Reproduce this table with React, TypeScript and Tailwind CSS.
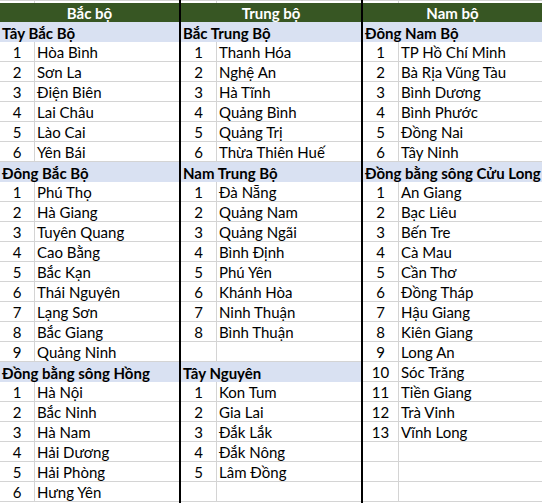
import React from "react";

type Row =
  | { t: "s"; text: string }
  | { t: "i"; n: number; name: string }
  | { t: "e" };

const sec = (text: string): Row => ({ t: "s", text });
const items = (names: string[]): Row[] => names.map((name, i) => ({ t: "i", n: i + 1, name }));
const empty = (): Row => ({ t: "e" });

const groups: { title: string; width: string; numW: string; rows: Row[] }[] = [
  {
    title: "Bắc bộ",
    width: "w-[181px] border-r-2",
    numW: "w-[35px]",
    rows: [
      sec("Tây Bắc Bộ"),
      ...items(["Hòa Bình", "Sơn La", "Điện Biên", "Lai Châu", "Lào Cai", "Yên Bái"]),
      sec("Đông Bắc Bộ"),
      ...items([
        "Phú Thọ",
        "Hà Giang",
        "Tuyên Quang",
        "Cao Bằng",
        "Bắc Kạn",
        "Thái Nguyên",
        "Lạng Sơn",
        "Bắc Giang",
        "Quảng Ninh",
      ]),
      sec("Đồng bằng sông Hồng"),
      ...items(["Hà Nội", "Bắc Ninh", "Hà Nam", "Hải Dương", "Hải Phòng", "Hưng Yên"]),
    ],
  },
  {
    title: "Trung bộ",
    width: "w-[182px] border-r-2",
    numW: "w-[36px]",
    rows: [
      sec("Bắc Trung Bộ"),
      ...items(["Thanh Hóa", "Nghệ An", "Hà Tĩnh", "Quảng Bình", "Quảng Trị", "Thừa Thiên Huế"]),
      sec("Nam Trung Bộ"),
      ...items([
        "Đà Nẵng",
        "Quảng Nam",
        "Quảng Ngãi",
        "Bình Định",
        "Phú Yên",
        "Khánh Hòa",
        "Ninh Thuận",
        "Bình Thuận",
      ]),
      empty(),
      sec("Tây Nguyên"),
      ...items(["Kon Tum", "Gia Lai", "Đắk Lắk", "Đắk Nông", "Lâm Đồng"]),
      empty(),
    ],
  },
  {
    title: "Nam bộ",
    width: "flex-1",
    numW: "w-[36px]",
    rows: [
      sec("Đông Nam Bộ"),
      ...items(["TP Hồ Chí Minh", "Bà Rịa Vũng Tàu", "Bình Dương", "Bình Phước", "Đồng Nai", "Tây Ninh"]),
      sec("Đồng bằng sông Cửu Long"),
      ...items([
        "An Giang",
        "Bạc Liêu",
        "Bến Tre",
        "Cà Mau",
        "Cần Thơ",
        "Đồng Tháp",
        "Hậu Giang",
        "Kiên Giang",
        "Long An",
        "Sóc Trăng",
        "Tiền Giang",
        "Trà Vinh",
        "Vĩnh Long",
      ]),
      empty(),
      empty(),
      empty(),
    ],
  },
];

function Group({ g }: { g: (typeof groups)[number] }) {
  return (
    <div className={`${g.width} border-black flex flex-col min-w-0`}>
      <div className="h-[3px] flex border-t border-[#d4d4d4]">
        <div className={`${g.numW} border-r border-[#d4d4d4]`} />
        <div className="flex-1" />
      </div>
      <div className="h-[19px] bg-[#375623] text-white font-bold flex items-center justify-center pt-[2px]">
        {g.title}
      </div>
      {g.rows.map((r, i) => {
        if (r.t === "s") {
          return (
            <div
              key={i}
              className="h-[20px] bg-[#d9e1f2] font-bold flex items-center pl-[2px] pt-[2px] whitespace-nowrap"
            >
              {r.text}
            </div>
          );
        }
        return (
          <div key={i} className="h-[20px] flex border-b border-[#d4d4d4]">
            <div className={`${g.numW} border-r border-[#d4d4d4] flex items-center justify-center pt-[2px]`}>
              {r.t === "i" ? r.n : ""}
            </div>
            <div className="flex-1 flex items-center pl-[2px] pt-[2px] whitespace-nowrap">
              {r.t === "i" ? r.name : ""}
            </div>
          </div>
        );
      })}
    </div>
  );
}

export default function App() {
  return (
    <div
      className="w-[542px] h-[503px] bg-white text-black flex overflow-hidden text-[15px] leading-none"
      style={{ fontFamily: "Lato, 'Noto Sans', sans-serif" }}
    >
      {groups.map((g, i) => (
        <Group key={i} g={g} />
      ))}
    </div>
  );
}
